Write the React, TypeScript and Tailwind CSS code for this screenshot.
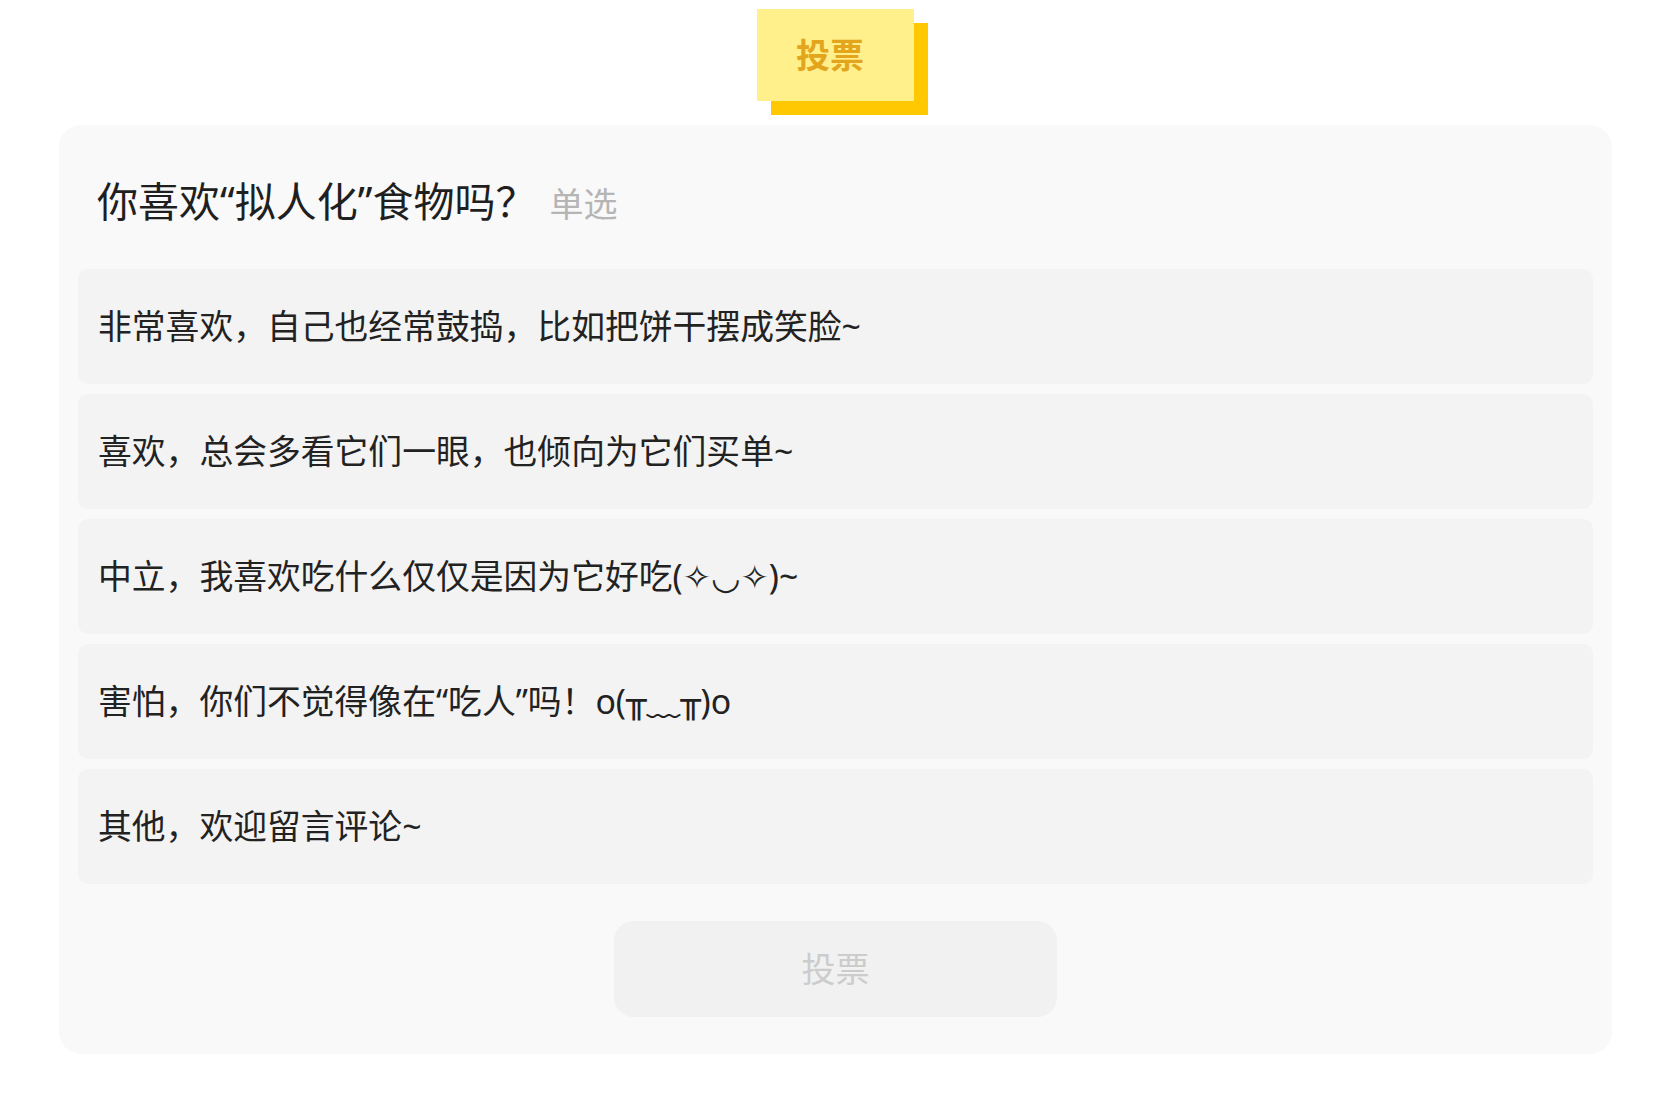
import React from "react";

const options: React.ReactNode[] = [
  "非常喜欢，自己也经常鼓捣，比如把饼干摆成笑脸~",
  "喜欢，总会多看它们一眼，也倾向为它们买单~",
  "中立，我喜欢吃什么仅仅是因为它好吃(✧◡✧)~",
  <>
    害怕，你们不觉得像在“吃人”吗！o(
    <span style={{ fontFamily: '"DejaVu Sans Mono", monospace' }}>╥</span>
    <span style={{ fontFamily: '"Noto Sans CJK SC", sans-serif' }}>﹏</span>
    <span style={{ fontFamily: '"DejaVu Sans Mono", monospace' }}>╥</span>)o
  </>,
  "其他，欢迎留言评论~",
];

export default function App() {
  return (
    <div
      className="min-h-screen bg-white pb-[52px]"
      style={{ fontFamily: '"Noto Sans", "Noto Sans CJK SC", "DejaVu Sans", sans-serif' }}
    >
      <div className="flex justify-center pt-[9px] pl-[4px]">
        <div className="w-[157px] h-[92px] bg-[#fff08c] shadow-[14px_14px_0_0_#ffc800] flex items-center justify-center pr-[10px]">
          <span className="text-[34px] font-bold text-[#e3a51c] leading-none">投票</span>
        </div>
      </div>
      <div className="ml-[59px] w-[1553px] mt-[24px] bg-[#f9f9f9] rounded-[22px] px-[19px] pb-[37px]">
        <div className="pt-[49px] pb-[38px] pl-[19px] flex items-baseline">
          <span className="text-[41px] leading-[54px] text-[#1f1f1f]">你喜欢“拟人化”食物吗？</span>
          <span className="ml-[13px] text-[34px] leading-[54px] text-[#b5b5b5]">单选</span>
        </div>
        <div className="flex flex-col gap-[10px]">
          {options.map((o, i) => (
            <div
              key={i}
              className="h-[115px] rounded-[10px] bg-[#f3f3f3] flex items-center pl-[20px] text-[33.8px] text-[#222222] whitespace-pre"
            >
              {o}
            </div>
          ))}
        </div>
        <div className="flex justify-center mt-[37px]">
          <button className="w-[443px] h-[96px] rounded-[20px] bg-[#f1f1f1] text-[34px] text-[#cccccc] flex items-center justify-center">
            投票
          </button>
        </div>
      </div>
    </div>
  );
}
